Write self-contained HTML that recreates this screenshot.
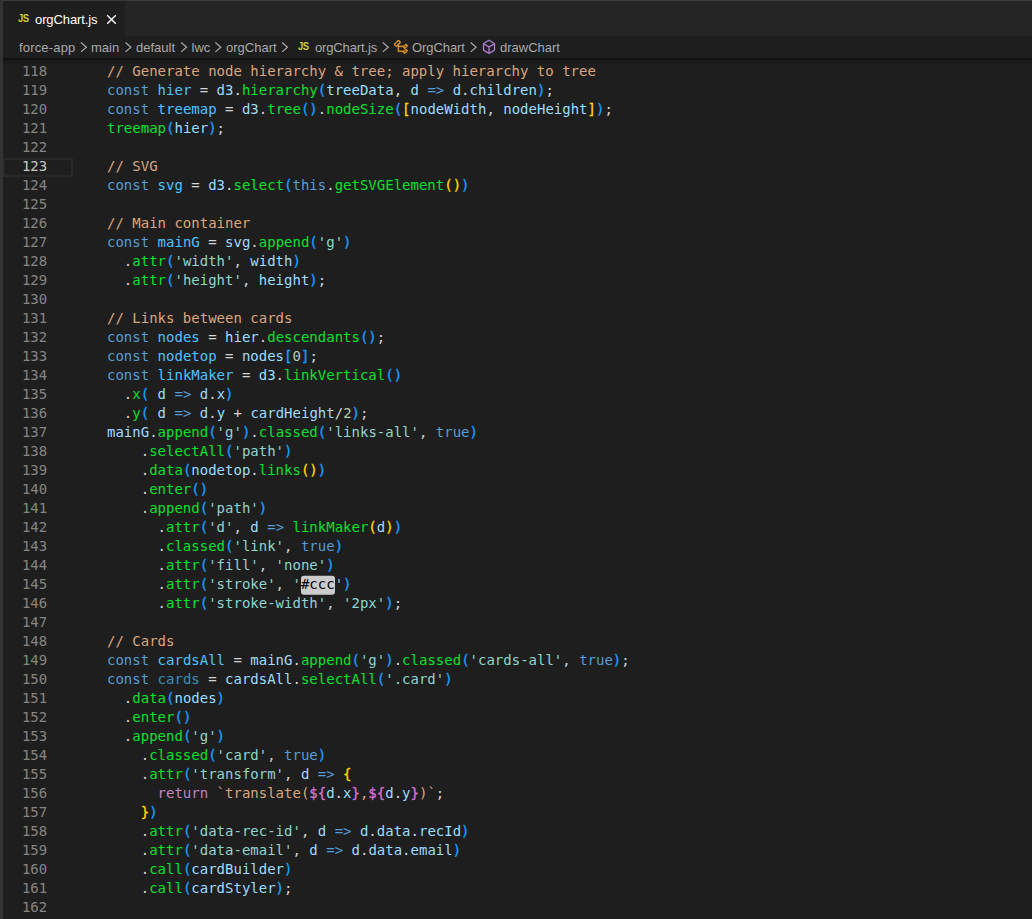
<!DOCTYPE html>
<html lang="en">
<head>
<meta charset="utf-8">
<title>orgChart.js</title>
<style>
html,body{margin:0;padding:0;}
body{width:1032px;height:919px;overflow:hidden;background:#1e1e1e;position:relative;font-family:"Liberation Sans",sans-serif;}
.frame-top{position:absolute;left:0;top:0;width:1032px;height:1px;background:#3a3a3a;}
.frame-left{position:absolute;left:0;top:0;width:3px;height:919px;background:#333333;}
.tabbar{position:absolute;left:3px;top:1px;width:1029px;height:35px;background:#252526;}
.tab{position:absolute;left:0;top:0;width:122px;height:35px;background:#1e1e1e;}
.ui{position:absolute;white-space:pre;font-size:13px;line-height:22px;height:22px;color:#a9a9a9;}
.tab .ui{color:#ffffff;}
.jsic{position:absolute;font-weight:bold;font-size:11px;color:#cbcb41;line-height:12px;letter-spacing:-0.6px;transform-origin:0 50%;transform:scaleX(0.86);}
.crumbs{position:absolute;left:3px;top:36px;width:1029px;height:22px;background:#1e1e1e;}
.shadow{position:absolute;left:3px;top:58px;width:1029px;height:6px;box-shadow:#000 0 6px 6px -6px inset;}
.chev{position:absolute;top:0;}
.editor{position:absolute;left:0;top:63px;width:1032px;font-family:"DejaVu Sans Mono","Liberation Mono",monospace;font-size:14px;line-height:19px;color:#d4d4d4;}
.row{position:relative;height:19px;white-space:pre;}
.ln{transform:scaleY(0.95);transform-origin:0 14.400px;position:absolute;top:-1px;left:3px;width:44.2px;text-align:right;color:#858585;}
.ln.cur{color:#c6c6c6;}
.code{position:absolute;top:-1px;left:107px;transform:scaleY(0.95);transform-origin:0 14.400px;}
.curline{position:absolute;left:3px;top:158px;width:70px;height:19px;box-sizing:border-box;border:2px solid #282828;}
.c{color:#dca57c}.k{color:#569cd6}.K{color:#4fc1ff}.Kd{color:#4fc1ff;opacity:.667}.v{color:#9cdcfe}.f{color:#0be02c}
.s{color:#90d4cc}.n{color:#b5cea8}.r{color:#c586c0}
.b1{color:#179fff}.b2{color:#ffd700}.b3{color:#da70d6}
.b1,.b2,.b3{-webkit-text-stroke:0.3px currentColor;}
.hl{color:#000;position:relative;z-index:0}
.hl::before{content:"";position:absolute;z-index:-1;left:0;right:0;top:-1.05px;height:20px;background:#cccccc;border-radius:3px;}
</style>
</head>
<body>
<div class="tabbar">
  <div class="tab">
    <span class="jsic" style="left:14.500px;top:11px">JS</span>
    <span class="ui" id="t1" style="left:32px;top:8px;letter-spacing:-0.1px">orgChart.js</span>
    <svg style="position:absolute;left:103px;top:13px" width="11" height="11" viewBox="0 0 11 11"><path d="M1.2 1.2 L9.8 9.8 M9.8 1.2 L1.2 9.8" stroke="#ffffff" stroke-width="1.35" fill="none"/></svg>
  </div>
</div>
<div class="crumbs">
  <span class="ui" id="c1" style="letter-spacing:0.17px;left:16px;top:1px">force-app</span>
  <span class="ui" id="c2" style="left:88px;top:1px">main</span>
  <span class="ui" id="c3" style="left:133px;top:1px">default</span>
  <span class="ui" id="c4" style="left:188.500px;top:1px">lwc</span>
  <span class="ui" id="c5" style="left:223px;top:1px">orgChart</span>
  <span class="jsic" style="left:295px;top:4px">JS</span>
  <span class="ui" id="c6" style="letter-spacing:-0.14px;left:312px;top:1px">orgChart.js</span>
  <span class="ui" id="c7" style="letter-spacing:-0.08px;left:409px;top:1px">OrgChart</span>
  <span class="ui" id="c8" style="left:497px;top:1px">drawChart</span>
  <svg class="chev" style="left:0" width="1029" height="22" viewBox="0 0 1029 22">
    <g fill="none" stroke="#a9a9a9" stroke-width="1.2"><path d="M78.0 6.500 L83.4 11.200 L78.0 15.900"/><path d="M122.5 6.500 L127.9 11.200 L122.5 15.900"/><path d="M178.2 6.500 L183.6 11.200 L178.2 15.900"/><path d="M212.4 6.500 L217.8 11.200 L212.4 15.900"/><path d="M279.1 6.500 L284.5 11.200 L279.1 15.900"/><path d="M379.8 6.500 L385.2 11.200 L379.8 15.900"/><path d="M467.7 6.500 L473.1 11.200 L467.7 15.900"/></g>
    <g transform="translate(390 3)" fill="#ee9d28" stroke="#ee9d28" stroke-width="0.35"><path d="M11.340 9.710h.71l2.670-2.670v-.71L13.380 5h-.7l-1.820 1.810h-5V5.560l1.860-1.850V3l-2-2H5L1 5v.71l2 2h.71l1.140-1.150v5.790l.5.500H10v.52l1.330 1.340h.71l2.670-2.670v-.71L13.370 10h-.7l-1.860 1.850h-5v-4H10v.48l1.340 1.380zm1.690-3.650l.63.63-2 2-.63-.63 2-2zm0 5l.63.63-2 2-.63-.63 2-2zM3.350 6.650l-1.290-1.300 3.290-3.290 1.300 1.290-3.300 3.300z"/></g>
    <g transform="translate(478 3)" fill="#b180d7" stroke="#b180d7" stroke-width="0.3"><path d="M13.510 4l-5-3h-1l-5 3-.49.860v6l.49.850 5 3h1l5-3 .49-.85v-6L13.510 4zm-6 9.560l-4.500-2.700V5.700l4.500 2.450v5.410zM3.270 4.700l4.740-2.840 4.740 2.840-4.740 2.590L3.270 4.700zm9.740 6.160l-4.500 2.700V8.150l4.500-2.450v5.160z"/></g>
  </svg>
</div>
<div class="shadow"></div>
<div class="frame-top"></div>
<div class="frame-left"></div>
<div class="curline"></div>
<div class="editor">
<div class="row"><span class="ln">118</span><span class="code"><span class="c">// Generate node hierarchy &amp; tree; apply hierarchy to tree</span></span></div>
<div class="row"><span class="ln">119</span><span class="code"><span class="k">const</span> <span class="K">hier</span> = <span class="v">d3</span>.<span class="f">hierarchy</span><span class="b1">(</span><span class="v">treeData</span>, <span class="v">d</span> <span class="k">=&gt;</span> <span class="v">d</span>.<span class="v">children</span><span class="b1">)</span>;</span></div>
<div class="row"><span class="ln">120</span><span class="code"><span class="k">const</span> <span class="K">treemap</span> = <span class="v">d3</span>.<span class="f">tree</span><span class="b1">()</span>.<span class="f">nodeSize</span><span class="b1">(</span><span class="b2">[</span><span class="v">nodeWidth</span>, <span class="v">nodeHeight</span><span class="b2">]</span><span class="b1">)</span>;</span></div>
<div class="row"><span class="ln">121</span><span class="code"><span class="f">treemap</span><span class="b1">(</span><span class="v">hier</span><span class="b1">)</span>;</span></div>
<div class="row"><span class="ln">122</span><span class="code"></span></div>
<div class="row"><span class="ln cur">123</span><span class="code"><span class="c">// SVG</span></span></div>
<div class="row"><span class="ln">124</span><span class="code"><span class="k">const</span> <span class="K">svg</span> = <span class="v">d3</span>.<span class="f">select</span><span class="b1">(</span><span class="k">this</span>.<span class="f">getSVGElement</span><span class="b2">()</span><span class="b1">)</span></span></div>
<div class="row"><span class="ln">125</span><span class="code"></span></div>
<div class="row"><span class="ln">126</span><span class="code"><span class="c">// Main container</span></span></div>
<div class="row"><span class="ln">127</span><span class="code"><span class="k">const</span> <span class="K">mainG</span> = <span class="v">svg</span>.<span class="f">append</span><span class="b1">(</span><span class="s">'g'</span><span class="b1">)</span></span></div>
<div class="row"><span class="ln">128</span><span class="code">  .<span class="f">attr</span><span class="b1">(</span><span class="s">'width'</span>, <span class="v">width</span><span class="b1">)</span></span></div>
<div class="row"><span class="ln">129</span><span class="code">  .<span class="f">attr</span><span class="b1">(</span><span class="s">'height'</span>, <span class="v">height</span><span class="b1">)</span>;</span></div>
<div class="row"><span class="ln">130</span><span class="code"></span></div>
<div class="row"><span class="ln">131</span><span class="code"><span class="c">// Links between cards</span></span></div>
<div class="row"><span class="ln">132</span><span class="code"><span class="k">const</span> <span class="K">nodes</span> = <span class="v">hier</span>.<span class="f">descendants</span><span class="b1">()</span>;</span></div>
<div class="row"><span class="ln">133</span><span class="code"><span class="k">const</span> <span class="K">nodetop</span> = <span class="v">nodes</span><span class="b1">[</span><span class="n">0</span><span class="b1">]</span>;</span></div>
<div class="row"><span class="ln">134</span><span class="code"><span class="k">const</span> <span class="K">linkMaker</span> = <span class="v">d3</span>.<span class="f">linkVertical</span><span class="b1">()</span></span></div>
<div class="row"><span class="ln">135</span><span class="code">  .<span class="f">x</span><span class="b1">(</span> <span class="v">d</span> <span class="k">=&gt;</span> <span class="v">d</span>.<span class="v">x</span><span class="b1">)</span></span></div>
<div class="row"><span class="ln">136</span><span class="code">  .<span class="f">y</span><span class="b1">(</span> <span class="v">d</span> <span class="k">=&gt;</span> <span class="v">d</span>.<span class="v">y</span> + <span class="v">cardHeight</span>/<span class="n">2</span><span class="b1">)</span>;</span></div>
<div class="row"><span class="ln">137</span><span class="code"><span class="v">mainG</span>.<span class="f">append</span><span class="b1">(</span><span class="s">'g'</span><span class="b1">)</span>.<span class="f">classed</span><span class="b1">(</span><span class="s">'links-all'</span>, <span class="k">true</span><span class="b1">)</span></span></div>
<div class="row"><span class="ln">138</span><span class="code">    .<span class="f">selectAll</span><span class="b1">(</span><span class="s">'path'</span><span class="b1">)</span></span></div>
<div class="row"><span class="ln">139</span><span class="code">    .<span class="f">data</span><span class="b1">(</span><span class="v">nodetop</span>.<span class="f">links</span><span class="b2">()</span><span class="b1">)</span></span></div>
<div class="row"><span class="ln">140</span><span class="code">    .<span class="f">enter</span><span class="b1">()</span></span></div>
<div class="row"><span class="ln">141</span><span class="code">    .<span class="f">append</span><span class="b1">(</span><span class="s">'path'</span><span class="b1">)</span></span></div>
<div class="row"><span class="ln">142</span><span class="code">      .<span class="f">attr</span><span class="b1">(</span><span class="s">'d'</span>, <span class="v">d</span> <span class="k">=&gt;</span> <span class="f">linkMaker</span><span class="b2">(</span><span class="v">d</span><span class="b2">)</span><span class="b1">)</span></span></div>
<div class="row"><span class="ln">143</span><span class="code">      .<span class="f">classed</span><span class="b1">(</span><span class="s">'link'</span>, <span class="k">true</span><span class="b1">)</span></span></div>
<div class="row"><span class="ln">144</span><span class="code">      .<span class="f">attr</span><span class="b1">(</span><span class="s">'fill'</span>, <span class="s">'none'</span><span class="b1">)</span></span></div>
<div class="row"><span class="ln">145</span><span class="code">      .<span class="f">attr</span><span class="b1">(</span><span class="s">'stroke'</span>, <span class="s">'</span><span class="hl">#ccc</span><span class="s">'</span><span class="b1">)</span></span></div>
<div class="row"><span class="ln">146</span><span class="code">      .<span class="f">attr</span><span class="b1">(</span><span class="s">'stroke-width'</span>, <span class="s">'2px'</span><span class="b1">)</span>;</span></div>
<div class="row"><span class="ln">147</span><span class="code"></span></div>
<div class="row"><span class="ln">148</span><span class="code"><span class="c">// Cards</span></span></div>
<div class="row"><span class="ln">149</span><span class="code"><span class="k">const</span> <span class="K">cardsAll</span> = <span class="v">mainG</span>.<span class="f">append</span><span class="b1">(</span><span class="s">'g'</span><span class="b1">)</span>.<span class="f">classed</span><span class="b1">(</span><span class="s">'cards-all'</span>, <span class="k">true</span><span class="b1">)</span>;</span></div>
<div class="row"><span class="ln">150</span><span class="code"><span class="k">const</span> <span class="Kd">cards</span> = <span class="v">cardsAll</span>.<span class="f">selectAll</span><span class="b1">(</span><span class="s">'.card'</span><span class="b1">)</span></span></div>
<div class="row"><span class="ln">151</span><span class="code">  .<span class="f">data</span><span class="b1">(</span><span class="v">nodes</span><span class="b1">)</span></span></div>
<div class="row"><span class="ln">152</span><span class="code">  .<span class="f">enter</span><span class="b1">()</span></span></div>
<div class="row"><span class="ln">153</span><span class="code">  .<span class="f">append</span><span class="b1">(</span><span class="s">'g'</span><span class="b1">)</span></span></div>
<div class="row"><span class="ln">154</span><span class="code">    .<span class="f">classed</span><span class="b1">(</span><span class="s">'card'</span>, <span class="k">true</span><span class="b1">)</span></span></div>
<div class="row"><span class="ln">155</span><span class="code">    .<span class="f">attr</span><span class="b1">(</span><span class="s">'transform'</span>, <span class="v">d</span> <span class="k">=&gt;</span> <span class="b2">{</span></span></div>
<div class="row"><span class="ln">156</span><span class="code">      <span class="r">return</span> <span class="c">`translate(</span><span class="b3">${</span><span class="v">d</span>.<span class="v">x</span><span class="b3">}</span><span class="c">,</span><span class="b3">${</span><span class="v">d</span>.<span class="v">y</span><span class="b3">}</span><span class="c">)`</span>;</span></div>
<div class="row"><span class="ln">157</span><span class="code">    <span class="b2">}</span><span class="b1">)</span></span></div>
<div class="row"><span class="ln">158</span><span class="code">    .<span class="f">attr</span><span class="b1">(</span><span class="s">'data-rec-id'</span>, <span class="v">d</span> <span class="k">=&gt;</span> <span class="v">d</span>.<span class="v">data</span>.<span class="v">recId</span><span class="b1">)</span></span></div>
<div class="row"><span class="ln">159</span><span class="code">    .<span class="f">attr</span><span class="b1">(</span><span class="s">'data-email'</span>, <span class="v">d</span> <span class="k">=&gt;</span> <span class="v">d</span>.<span class="v">data</span>.<span class="v">email</span><span class="b1">)</span></span></div>
<div class="row"><span class="ln">160</span><span class="code">    .<span class="f">call</span><span class="b1">(</span><span class="v">cardBuilder</span><span class="b1">)</span></span></div>
<div class="row"><span class="ln">161</span><span class="code">    .<span class="f">call</span><span class="b1">(</span><span class="v">cardStyler</span><span class="b1">)</span>;</span></div>
<div class="row"><span class="ln">162</span><span class="code"></span></div>
</div>
</body>
</html>
